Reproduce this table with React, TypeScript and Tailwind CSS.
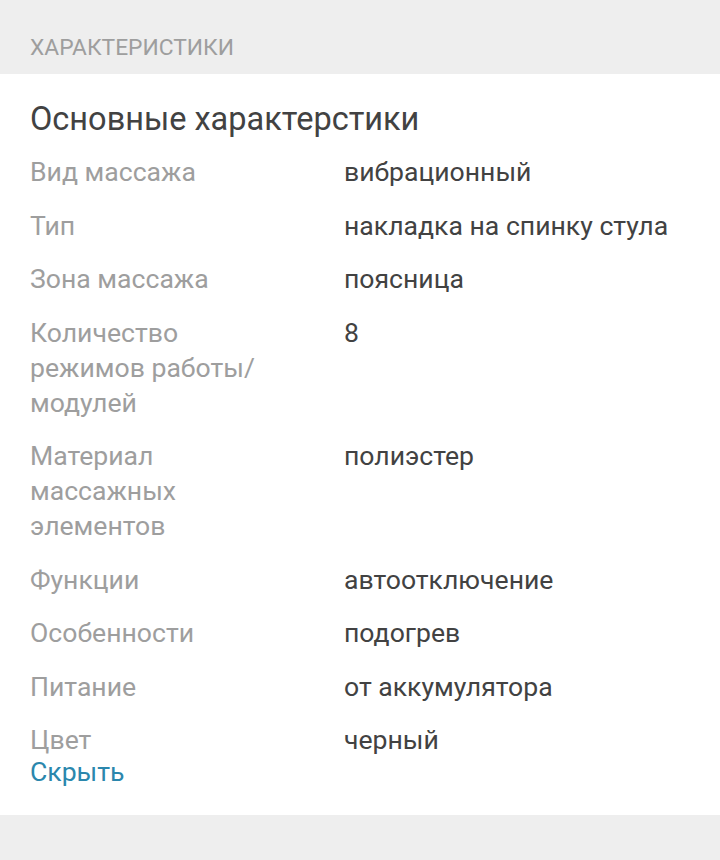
const specs: { label: string; value: string }[] = [
  { label: 'Вид массажа', value: 'вибрационный' },
  { label: 'Тип', value: 'накладка на спинку стула' },
  { label: 'Зона массажа', value: 'поясница' },
  { label: 'Количество режимов работы/ модулей', value: '8' },
  { label: 'Материал массажных элементов', value: 'полиэстер' },
  { label: 'Функции', value: 'автоотключение' },
  { label: 'Особенности', value: 'подогрев' },
  { label: 'Питание', value: 'от аккумулятора' },
  { label: 'Цвет', value: 'черный' },
];

export default function App() {
  return (
    <div className="min-h-[860px] bg-[#eeeeee] font-['Roboto',sans-serif]">
      <div className="h-[74px] flex items-center px-[30px] pt-[22px]">
        <h2 className="text-[22.8px] text-[#9e9e9e] uppercase">Характеристики</h2>
      </div>
      <div className="bg-white px-[30px] pt-[25px] pb-[27px]">
        <h3 className="text-[32.5px] leading-[40px] text-[#424242] mb-[15px]">Основные характерстики</h3>
        <div className="flex flex-col gap-[18.5px]">
          {specs.map((s) => (
            <div key={s.label} className="flex text-[26.6px] leading-[35px]">
              <div className="w-[314px] shrink-0 pr-[64px] text-[#9e9e9e]">{s.label}</div>
              <div className="flex-1 text-[#424242]">{s.value}</div>
            </div>
          ))}
        </div>
        <button className="text-[26.6px] leading-[30px] text-[#2b87ad]">Скрыть</button>
      </div>
    </div>
  );
}
